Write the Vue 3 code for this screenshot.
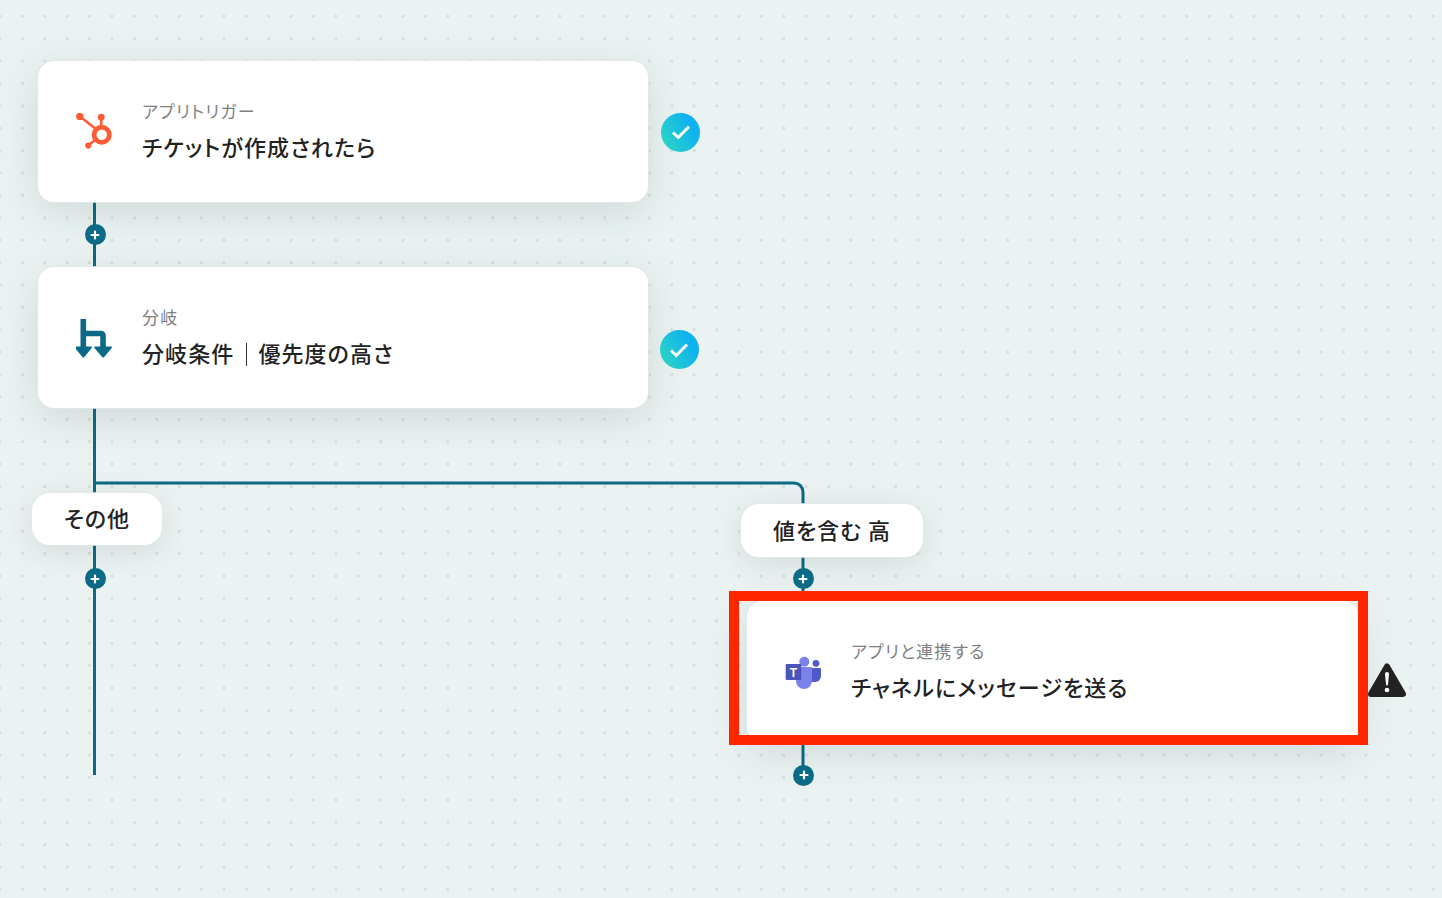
<script setup>
const cards = [
  { id: 'trigger', x: 38, y: 61, w: 610, h: 141, icon: 'hubspot', sub: 'アプリトリガー', title: ['チケットが作成されたら'] },
  { id: 'branch', x: 38, y: 267, w: 610, h: 141, icon: 'branch', sub: '分岐', title: ['分岐条件', '優先度の高さ'] },
  { id: 'teams', x: 747, y: 601, w: 612, h: 141, icon: 'teams', sub: 'アプリと連携する', title: ['チャネルにメッセージを送る'] }
]
const pills = [
  { text: 'その他', x: 32, y: 493, w: 130, h: 52 },
  { text: '値を含む 高', x: 741, y: 504, w: 182, h: 53 }
]
const plusses = [
  { x: 95, y: 234.5 },
  { x: 95, y: 578.5 },
  { x: 803, y: 578.5 },
  { x: 803.5, y: 775 }
]
const checks = [
  { x: 661, y: 112.5 },
  { x: 659.5, y: 330 }
]
const box = (n) => ({ left: `${n.x}px`, top: `${n.y}px`, width: `${n.w}px`, height: `${n.h}px` })
const at = (n) => ({ left: `${n.x}px`, top: `${n.y}px` })
</script>

<template>
  <div class="canvas">
    <svg class="wires" width="1442" height="898" viewBox="0 0 1442 898" fill="none">
      <path d="M94.5 202V775" />
      <path d="M94.5 483H794a9 9 0 0 1 9 9V504" />
      <path d="M803 557V775" />
    </svg>

    <div v-for="card in cards" :key="card.id" class="card" :style="box(card)">
      <div class="card-icon">
        <svg v-if="card.icon === 'hubspot'" width="40" height="40" viewBox="0 0 40 40">
          <g stroke="#ff5c35" fill="none">
            <circle cx="25.7" cy="21.7" r="7.6" stroke-width="4.8" />
            <path d="M25.2 6V15" stroke-width="2.6" />
            <path d="M4 3.5L20.5 16.5" stroke-width="2.6" />
            <path d="M12.5 32L20 26.5" stroke-width="2.6" />
          </g>
          <g fill="#ff5c35">
            <circle cx="25.2" cy="4.2" r="3.4" />
            <circle cx="3.8" cy="3.4" r="3.7" />
            <circle cx="12.3" cy="32.6" r="3.1" />
          </g>
        </svg>
        <svg v-else-if="card.icon === 'branch'" width="40" height="40" viewBox="0 0 40 40">
          <path d="M7.3 0.5V28M7.3 14.5H25a2 2 0 0 1 2 2V28" stroke="#0b6a85" stroke-width="5.6" fill="none" stroke-linecap="round" />
          <path d="M-0.4 27.5H15.2a0.8 0.8 0 0 1 0.5 1.4L8.4 38a1.3 1.3 0 0 1-2 0L-1 28.9a0.8 0.8 0 0 1 0.6-1.4Z" fill="#0b6a85" />
          <path d="M19 27.5H35.2a0.8 0.8 0 0 1 0.5 1.4L28.2 38a1.3 1.3 0 0 1-2 0L18.4 28.9a0.8 0.8 0 0 1 0.6-1.4Z" fill="#0b6a85" />
        </svg>
        <svg v-else width="40" height="40" viewBox="0 0 40 40">
          <circle cx="31" cy="10.3" r="3.4" fill="#5059c9" />
          <path d="M24 15h11a1 1 0 0 1 1 1v7a6 6 0 0 1-6 6h-6Z" fill="#5059c9" />
          <circle cx="19.3" cy="8.7" r="5" fill="#7b83eb" />
          <path d="M11 14h15a1 1 0 0 1 1 1v13a8 8 0 0 1-16 0Z" fill="#7b83eb" />
          <rect x="0.7" y="11" width="15.6" height="16" rx="1.2" fill="#4b53bc" />
          <text x="8.5" y="23.8" class="teams-t">T</text>
        </svg>
      </div>
      <div class="card-text">
        <div class="card-sub">{{ card.sub }}</div>
        <div class="card-title">
          <template v-for="(part, i) in card.title" :key="i">
            <span v-if="i > 0" class="sep"></span>{{ part }}
          </template>
        </div>
      </div>
    </div>

    <div v-for="pill in pills" :key="pill.text" class="pill" :style="box(pill)">{{ pill.text }}</div>

    <div v-for="(p, i) in plusses" :key="i" class="plus" :style="at(p)">
      <svg width="10" height="10" viewBox="0 0 10 10">
        <path d="M5 1.5V8.5M1.5 5H8.5" stroke="#fff" stroke-width="2.2" stroke-linecap="round" />
      </svg>
    </div>

    <div v-for="(c, i) in checks" :key="i" class="check" :style="at(c)">
      <svg width="20" height="16" viewBox="0 0 20 16" fill="none">
        <path d="M2 8.5L7.3 13.5L18 2.5" stroke="#fff" stroke-width="3" />
      </svg>
    </div>

    <div class="highlight"></div>

    <svg class="warn" width="38" height="35" viewBox="0 0 38 35">
      <path d="M19 3.5L35 31H3Z" fill="#222" stroke="#222" stroke-width="6" stroke-linejoin="round" />
      <path d="M17 11a2 2 0 0 1 4 0L20 21.5a1 1 0 0 1-2 0Z" fill="#fff" />
      <circle cx="19" cy="27" r="2.3" fill="#fff" />
    </svg>
  </div>
</template>

<style>
html, body {
  margin: 0;
  background: #eaf3f2;
}
</style>

<style scoped>
.canvas {
  position: relative;
  width: 1442px;
  height: 898px;
  overflow: hidden;
  background-color: #eaf3f2;
  background-image: radial-gradient(circle, #d6dfde 0 1.3px, transparent 1.9px);
  background-size: 22.4px 22.4px;
  background-position: -11.2px 5.1px;
  font-family: "Noto Sans CJK JP", "Noto Sans", sans-serif;
  font-feature-settings: "palt";
  color: #222;
}
.wires {
  position: absolute;
  left: 0;
  top: 0;
}
.wires path {
  stroke: #0b6a85;
  stroke-width: 3;
}
.card {
  position: absolute;
  display: flex;
  align-items: flex-start;
  box-sizing: border-box;
  padding: 50px 0 0 38px;
  background: #fff;
  border-radius: 16px;
  box-shadow: 0 0 0 1px rgba(225, 232, 232, .8), 0 10px 40px rgba(30, 50, 50, .13);
}
.card-icon {
  flex: none;
  width: 40px;
  height: 40px;
  margin-top: 2px;
}
.card-text {
  margin-left: 26px;
}
.card-sub {
  margin-top: -12px;
  font-size: 17px;
  line-height: 24px;
  letter-spacing: 1.2px;
  color: #808080;
}
.card-title {
  margin-top: 11px;
  font-size: 22px;
  font-weight: 500;
  line-height: 24px;
  letter-spacing: 1.1px;
  color: #222;
  white-space: nowrap;
}
.sep {
  display: inline-block;
  width: 1px;
  height: 23px;
  margin: 0 11px 0 12px;
  vertical-align: -4px;
  background: #333;
}
.teams-t {
  font-family: "Liberation Sans", sans-serif;
  font-size: 12px;
  font-weight: 700;
  fill: #fff;
  text-anchor: middle;
}
.pill {
  position: absolute;
  display: flex;
  align-items: center;
  justify-content: center;
  box-sizing: border-box;
  padding-bottom: 4px;
  background: #fff;
  border-radius: 18px;
  font-size: 22px;
  font-weight: 500;
  letter-spacing: 1px;
  color: #222;
  box-shadow: 0 0 0 1px rgba(225, 232, 232, .8), 0 6px 30px rgba(30, 50, 50, .12);
}
.plus {
  position: absolute;
  display: flex;
  align-items: center;
  justify-content: center;
  width: 21px;
  height: 21px;
  margin: -10.5px 0 0 -10.5px;
  border-radius: 50%;
  background: #0b6a85;
}
.check {
  position: absolute;
  display: flex;
  align-items: center;
  justify-content: center;
  width: 39px;
  height: 39px;
  border-radius: 50%;
  background: linear-gradient(60deg, #2fd9bd, #0fb2f0 75%);
}
.highlight {
  position: absolute;
  left: 729px;
  top: 591px;
  width: 639px;
  height: 154px;
  box-sizing: border-box;
  border: 10px solid #ff2600;
}
.warn {
  position: absolute;
  left: 1368px;
  top: 663px;
}
</style>
